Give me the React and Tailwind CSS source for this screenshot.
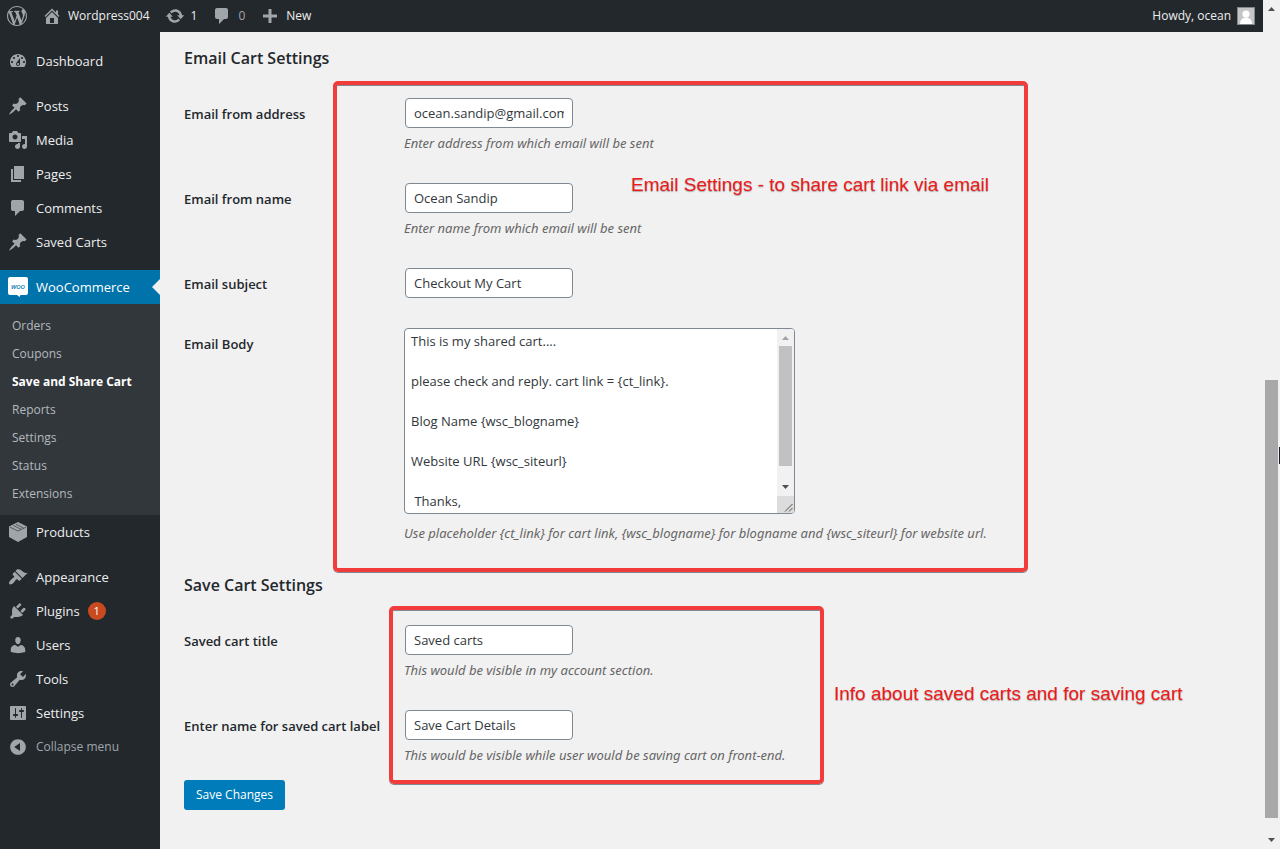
import React from "react";

const paths = {
  wordpress:
    "M20 10c0-5.51-4.49-10-10-10C4.48 0 0 4.49 0 10c0 5.52 4.48 10 10 10 5.51 0 10-4.48 10-10zM7.78 15.37L4.37 6.22c.55-.02 1.17-.08 1.17-.08.5-.06.44-1.13-.06-1.11 0 0-1.45.11-2.37.11-.18 0-.37 0-.58-.01C4.12 2.69 6.87 1.11 10 1.11c2.33 0 4.45.87 6.05 2.34-.68-.11-1.65.39-1.65 1.58 0 .74.45 1.36.9 2.1.35.61.55 1.36.55 2.46 0 1.49-1.4 5-1.4 5l-3.03-8.37c.54-.02.82-.17.82-.17.5-.05.44-1.25-.06-1.22 0 0-1.44.12-2.38.12-.87 0-2.33-.12-2.33-.12-.5-.03-.56 1.2-.06 1.22l.92.08 1.26 3.41zM17.41 10c.24-.64.74-1.87.43-4.25.7 1.29 1.05 2.71 1.05 4.25 0 3.29-1.73 6.24-4.4 7.78.97-2.59 1.94-5.2 2.92-7.78zM6.1 18.09C3.12 16.65 1.11 13.53 1.11 10c0-1.3.23-2.48.72-3.59C3.25 10.3 4.67 14.2 6.1 18.09zm4.03-6.63l2.58 6.98c-.86.29-1.76.45-2.71.45-.79 0-1.57-.11-2.29-.33.81-2.38 1.62-4.74 2.42-7.1z",
  home: "M16 8.5l1.53 1.53-1.06 1.06L10 4.6l-6.47 6.49-1.06-1.06L10 2.5l4 4v-2h2v4zm-6-2.46l6 5.99V18H4v-5.97zM12 17v-5H8v5h4z",
  update:
    "M10.2 3.28c3.53 0 6.43 2.61 6.92 6h2.08l-3.5 4-3.5-4h2.32c-.45-1.97-2.21-3.45-4.32-3.45-1.45 0-2.73.71-3.54 1.78L4.95 5.66C6.23 4.2 8.11 3.28 10.2 3.28zm-.4 13.44c-3.52 0-6.43-2.61-6.92-6H.8l3.5-4c1.17 1.33 2.33 2.67 3.5 4H5.48c.45 1.97 2.21 3.45 4.32 3.45 1.45 0 2.73-.71 3.54-1.78l1.71 1.95c-1.28 1.46-3.15 2.38-5.25 2.38z",
  plus: "M17 8.5v3h-5.5V17h-3v-5.5H3v-3h5.500V3h3v5.500z",
  dashboard:
    "M3.76 16h12.48c1.1-1.37 1.76-3.11 1.76-5 0-4.42-3.58-8-8-8s-8 3.58-8 8c0 1.89.66 3.63 1.76 5zM10 4c.55 0 1 .45 1 1s-.45 1-1 1-1-.45-1-1 .45-1 1-1zM6 6c.55 0 1 .45 1 1s-.45 1-1 1-1-.45-1-1 .45-1 1-1zm8 0c.55 0 1 .45 1 1s-.45 1-1 1-1-.45-1-1 .45-1 1-1zm-5.37 5.55L12 7v6c0 1.1-.9 2-2 2s-2-.9-2-2c0-.57.24-1.08.63-1.45zM4 10c.55 0 1 .45 1 1s-.45 1-1 1-1-.45-1-1 .45-1 1-1zm12 0c.55 0 1 .45 1 1s-.45 1-1 1-1-.45-1-1 .45-1 1-1zm-5 3c0-.55-.45-1-1-1s-1 .45-1 1 .45 1 1 1 1-.45 1-1z",
  pin: "M10.44 3.02l1.82-1.82 6.36 6.35-1.83 1.82c-1.05-.68-2.48-.57-3.41.36l-.75.75c-.92.93-1.04 2.35-.35 3.41l-1.83 1.82-2.41-2.41-2.8 2.79c-.42.42-3.38 2.71-3.8 2.29s1.86-3.39 2.28-3.81l2.79-2.79L4.1 9.36l1.83-1.82c1.05.69 2.48.57 3.4-.36l.75-.75c.93-.92 1.05-2.35.36-3.41z",
  media:
    "M13 11V4c0-.55-.45-1-1-1h-1.67L9 1H5L3.67 3H2c-.55 0-1 .45-1 1v7c0 .55.45 1 1 1h10c.55 0 1-.45 1-1zM7 4.5c1.38 0 2.5 1.12 2.5 2.5S8.38 9.5 7 9.5 4.5 8.38 4.5 7 5.62 4.5 7 4.5zM14 6h5v10.5c0 1.38-1.12 2.5-2.5 2.5S14 17.88 14 16.5s1.12-2.5 2.5-2.5c.17 0 .34.02.5.05V9h-3V6zm-4 8.050V13h2v3.500c0 1.380-1.120 2.500-2.500 2.500S7 17.880 7 16.500 8.120 14 9.500 14c.17 0 .34.02.5.05z",
  page: "M6 15V2h10v13H6zm-1 1h8v2H3V5h2v11z",
  comment:
    "M5 2h9c1.1 0 2 .9 2 2v7c0 1.1-.9 2-2 2h-2l-5 5v-5H5c-1.1 0-2-.9-2-2V4c0-1.1.9-2 2-2z",
  appearance:
    "M14.48 11.06L7.41 3.99l1.5-1.5c.5-.56 2.3-.47 3.51.32 1.21.8 1.43 1.28 2.91 2.1 1.18.64 2.45 1.26 4.45.85zm-.71.71L6.7 4.7 4.93 6.47c-.39.39-.39 1.02 0 1.41l1.06 1.06c.39.39.39 1.03 0 1.42-.6.6-1.43 1.11-2.21 1.69-.35.26-.7.53-1.01.84C1.43 14.23.4 16.08 1.4 17.07c.99 1 2.84-.03 4.18-1.36.31-.31.58-.66.85-1.02.57-.78 1.08-1.61 1.69-2.21.39-.39 1.02-.39 1.41 0l1.06 1.06c.39.39 1.02.39 1.41 0z",
  plugins:
    "M13.11 4.36L9.87 7.6 8 5.73l3.24-3.24c.35-.34 1.05-.2 1.56.32.52.51.66 1.21.31 1.55zm-8 1.77l.91-1.12 9.01 9.01-1.19.84c-.71.71-2.63 1.16-3.82 1.16H6.14L4.9 17.26c-.59.59-1.54.59-2.12 0-.59-.58-.59-1.53 0-2.12l1.24-1.24v-3.88c0-1.13.4-3.19 1.09-3.89zm7.26 3.97l3.24-3.24c.34-.35 1.04-.21 1.55.31.52.51.66 1.21.31 1.55l-3.24 3.25z",
  users:
    "M10 9.25c-2.27 0-2.73-3.44-2.73-3.44C7 4.02 7.82 2 9.97 2c2.16 0 2.98 2.02 2.71 3.81 0 0-.41 3.44-2.68 3.44zm0 2.57L12.72 10c2.39 0 4.52 2.33 4.52 4.53v2.49s-3.65 1.13-7.24 1.13c-3.65 0-7.24-1.13-7.24-1.13v-2.49c0-2.25 1.94-4.48 4.47-4.48z",
  tools:
    "M16.68 9.77c-1.34 1.34-3.3 1.67-4.95.99l-5.41 6.52c-.99.99-2.59.99-3.58 0s-.99-2.59 0-3.57l6.52-5.42c-.68-1.65-.35-3.61.99-4.95 1.28-1.28 3.12-1.62 4.72-1.06l-2.89 2.89 2.82 2.82 2.86-2.87c.53 1.58.18 3.39-1.08 4.65zM3.81 16.21c.4.39 1.04.39 1.43 0 .4-.4.4-1.04 0-1.43-.39-.4-1.03-.4-1.43 0-.39.39-.39 1.03 0 1.43z",
  settings:
    "M18 16V4c0-.55-.45-1-1-1H3c-.55 0-1 .45-1 1v12c0 .55.45 1 1 1h14c.55 0 1-.45 1-1zM8 11h1c.55 0 1 .45 1 1s-.45 1-1 1H8v1.5c0 .28-.22.5-.5.5s-.5-.22-.5-.5V13H6c-.55 0-1-.45-1-1s.45-1 1-1h1V5.5c0-.28.22-.5.5-.5s.5.22.5.5V11zm5-2h-1c-.55 0-1-.45-1-1s.45-1 1-1h1V5.5c0-.28.22-.5.5-.5s.5.22.5.5V7h1c.55 0 1 .45 1 1s-.45 1-1 1h-1v5.5c0 .28-.22.5-.5.5s-.5-.22-.5-.5V9z",
  collapse:
    "M10 2.16c4.33 0 7.84 3.51 7.84 7.84s-3.51 7.84-7.84 7.84S2.16 14.33 2.16 10 5.71 2.16 10 2.16zm2 11.72V6.12L6.18 9.97z",
};

function Icon({ name }) {
  return (
    <svg viewBox="0 0 20 20" className="size-5 shrink-0 text-[#a0a5aa]" fill="currentColor" fillRule="evenodd" aria-hidden="true">
      <path d={paths[name]} />
    </svg>
  );
}

function BoxIcon() {
  return (
    <svg viewBox="0 0 20 20" className="size-5 shrink-0" aria-hidden="true">
      <path d="M10 0l9 4.600v10.400l-9 5-9-5V4.600z" fill="#a0a5aa" />
      <path d="M2 5.200L10 9 18 5.200M5.500 3.500l7.500 3.800M8 2.200l7.500 3.800" fill="none" stroke="#23282d" strokeWidth="0.600" />
    </svg>
  );
}

function WooIcon() {
  return (
    <svg viewBox="0 0 20 20" className="size-5 shrink-0" aria-hidden="true">
      <path d="M2 0h16a2 2 0 0 1 2 2v14a2 2 0 0 1-2 2h-5.500l-1 2-2.500-2H2a2 2 0 0 1-2-2V2a2 2 0 0 1 2-2z" fill="#fff" />
      <text x="10" y="11.500" textAnchor="middle" fontSize="6" fontWeight="600" fontStyle="italic" fill="#0073aa">
        WOO
      </text>
    </svg>
  );
}

function MenuItem({ icon, label, children }) {
  return (
    <li>
      <a href="#" className="flex h-[34px] items-center gap-2 pl-2 text-[#eee]">
        {icon === "box" ? <BoxIcon /> : <Icon name={icon} />}
        <span>{label}</span>
        {children}
      </a>
    </li>
  );
}

const submenu = ["Orders", "Coupons", "Save and Share Cart", "Reports", "Settings", "Status", "Extensions"];

function Sidebar() {
  return (
    <nav aria-label="Main menu" className="w-40 shrink-0 bg-[#23282d] pt-3 text-[13px] leading-5">
      <ul>
        <MenuItem icon="dashboard" label="Dashboard" />
      </ul>
      <ul className="mt-[11px]">
        <MenuItem icon="pin" label="Posts" />
        <MenuItem icon="media" label="Media" />
        <MenuItem icon="page" label="Pages" />
        <MenuItem icon="comment" label="Comments" />
        <MenuItem icon="pin" label="Saved Carts" />
      </ul>
      <ul className="mt-[11px]">
        <li>
          <a href="#" className="flex h-[34px] items-center gap-2 bg-[#0073aa] pl-2 text-white">
            <WooIcon />
            <span>WooCommerce</span>
            <svg viewBox="0 0 8 16" className="ml-auto h-4 w-2" aria-hidden="true">
              <path d="M8 0v16L0 8z" fill="#f1f1f1" />
            </svg>
          </a>
          <ul className="bg-[#32373c] pt-2 pb-[7px]">
            {submenu.map((s) => (
              <li key={s}>
                <a
                  href="#"
                  className={
                    s === "Save and Share Cart"
                      ? "flex h-7 items-center pl-3 text-xs font-bold text-white"
                      : "flex h-7 items-center pl-3 text-xs text-[#b4b9be]"
                  }
                >
                  {s}
                </a>
              </li>
            ))}
          </ul>
        </li>
        <MenuItem icon="box" label="Products" />
      </ul>
      <ul className="mt-[11px]">
        <MenuItem icon="appearance" label="Appearance" />
        <MenuItem icon="plugins" label="Plugins">
          <span className="flex size-[18px] items-center justify-center rounded-full bg-[#ca4a1f] text-[11px] text-white">1</span>
        </MenuItem>
        <MenuItem icon="users" label="Users" />
        <MenuItem icon="tools" label="Tools" />
        <MenuItem icon="settings" label="Settings" />
        <li>
          <button type="button" className="flex h-[34px] w-full items-center gap-2 pl-2 text-left text-xs text-[#a0a5aa]">
            <Icon name="collapse" />
            <span>Collapse menu</span>
          </button>
        </li>
      </ul>
    </nav>
  );
}

function TopBar() {
  return (
    <header className="flex h-8 items-center justify-between bg-[#23282d] pr-2 pl-[7px] text-xs text-[#eee]">
      <div className="flex items-center gap-[15px]">
        <a href="#" aria-label="About WordPress">
          <Icon name="wordpress" />
        </a>
        <a href="#" className="flex items-center gap-1.5">
          <Icon name="home" />
          Wordpress004
        </a>
        <a href="#" className="flex items-center gap-1.5">
          <Icon name="update" />1
        </a>
        <a href="#" className="flex items-center gap-1.5 text-[#a0a5aa]">
          <Icon name="comment" />0
        </a>
        <a href="#" className="flex items-center gap-1.5">
          <Icon name="plus" />
          <span>New</span>
        </a>
      </div>
      <a href="#" className="flex items-center gap-1.5">
        Howdy, ocean
        <svg viewBox="0 0 18 18" className="size-[18px]" aria-hidden="true">
          <path d="M0 0h18v18H0z" fill="#82878c" />
          <path d="M1 1h16v16H1z" fill="#c5c5c5" />
          <circle cx="9" cy="7" r="3.600" fill="#fff" />
          <path d="M3 17c0-4 2.500-6.500 6-6.500s6 2.500 6 6.500z" fill="#fff" />
        </svg>
      </a>
    </header>
  );
}

function Arrow({ up, muted }) {
  return (
    <svg viewBox="0 0 17 17" className="size-[17px] shrink-0" aria-hidden="true">
      <path d={up ? "M5 11h7L8.500 7z" : "M5 6h7L8.500 10z"} fill={muted ? "#a3a3a3" : "#505050"} />
    </svg>
  );
}

function Row({ id, label, hint, children }) {
  return (
    <div className="grid grid-cols-[220px_minmax(0,1fr)] py-[15px]">
      <label htmlFor={id} className="pt-1.5 text-[13px] leading-5 font-semibold text-[#23282d]">
        {label}
      </label>
      <div>
        {children}
        {hint && <p className="mt-[5px] font-['Noto_Sans','Segoe_UI',sans-serif] text-[13px] leading-5 text-[#666] italic">{hint}</p>}
      </div>
    </div>
  );
}

function TextRow({ id, label, hint, value, type = "text" }) {
  return (
    <Row id={id} label={label} hint={hint}>
      <input
        id={id}
        type={type}
        defaultValue={value}
        className="mx-px block h-[30px] w-[168px] rounded-[4px] border border-[#7e8993] bg-white px-2 text-[13px] text-[#32373c]"
      />
    </Row>
  );
}

const body = `This is my shared cart....

please check and reply. cart link = {ct_link}.

Blog Name {wsc_blogname}

Website URL {wsc_siteurl}

 Thanks,`;

function BodyField() {
  return (
    <div className="mb-[9px] flex h-[186px] w-[391px] overflow-hidden rounded-[4px] border border-[#7e8993] bg-white">
      <textarea
        id="email-body"
        defaultValue={body}
        className="min-w-0 flex-1 resize-none overflow-hidden px-1.5 py-0.5 text-[13px] leading-5 text-[#32373c] outline-none"
      />
      <div aria-hidden="true" className="flex w-[17px] flex-col bg-[#f1f1f1]">
        <Arrow up muted />
        <div className="mx-0.5 h-[120px] bg-[#c1c1c1]" />
        <div className="flex-1" />
        <Arrow />
        <svg viewBox="0 0 17 17" className="size-[17px] bg-[#dcdcdc]">
          <path d="M8 15.500L15.500 8M12 15.500l3.500-3.500" stroke="#505050" fill="none" />
        </svg>
      </div>
    </div>
  );
}

function PageScrollbar() {
  return (
    <div aria-hidden="true" className="relative flex w-[17px] shrink-0 flex-col bg-[#f1f1f1]">
      <Arrow up />
      <div className="grow-[363]" />
      <div className="mx-0.5 grow-[438] bg-[#a8a8a8]" />
      <div className="grow-[14]" />
      <Arrow />
      <span className="absolute top-[447px] right-0 h-[17px] w-px bg-[#1a1a2a]" />
    </div>
  );
}

const frame =
  "pointer-events-none absolute rounded-[5px] border-4 border-[#f23b3b] shadow-[0_1px_0_#808890,inset_0_1px_0_#808890]";
const note =
  "pointer-events-none absolute font-['Liberation_Sans',Arial,sans-serif] text-[19px] leading-6 whitespace-nowrap text-[#ee1a1a] [text-shadow:0_1px_1px_#aaa]";

export default function App() {
  return (
    <div className="flex min-h-screen bg-[#f1f1f1] font-['Open_Sans','Segoe_UI',sans-serif]">
      <div className="flex min-w-0 flex-1 flex-col">
        <TopBar />
        <div className="flex flex-1">
          <Sidebar />
          <main className="relative min-w-0 flex-1 px-6 pt-3.5">
            <form onSubmit={(e) => e.preventDefault()}>
              <h2 className="mb-[13px] text-base leading-6 font-semibold text-[#23282d]">Email Cart Settings</h2>
              <TextRow
                id="email-address"
                label="Email from address"
                value="ocean.sandip@gmail.com"
                hint="Enter address from which email will be sent"
              />
              <TextRow id="email-name" label="Email from name" value="Ocean Sandip" hint="Enter name from which email will be sent" />
              <TextRow id="email-subject" label="Email subject" value="Checkout My Cart" />
              <Row
                id="email-body"
                label="Email Body"
                hint="Use placeholder {ct_link} for cart link, {wsc_blogname} for blogname and {wsc_siteurl} for website url."
              >
                <BodyField />
              </Row>
              <h2 className="mt-[15px] mb-[13px] text-base leading-6 font-semibold text-[#23282d]">Save Cart Settings</h2>
              <TextRow id="saved-title" label="Saved cart title" value="Saved carts" hint="This would be visible in my account section." />
              <TextRow
                id="saved-label"
                label="Enter name for saved cart label"
                value="Save Cart Details"
                hint="This would be visible while user would be saving cart on front-end."
              />
              <button type="submit" className="h-[30px] rounded-[3px] bg-[#007cba] px-3 text-xs text-white">
                Save Changes
              </button>
            </form>

            <div className={`${frame} top-[49px] left-[173px] h-[491px] w-[695px]`} />
            <p className={`${note} top-[141px] left-[471px]`}>Email Settings - to share cart link via email</p>
            <div className={`${frame} top-[574px] left-[229px] h-[178px] w-[435px]`} />
            <p className={`${note} top-[650px] left-[674px]`}>Info about saved carts and for saving cart</p>
          </main>
        </div>
      </div>
      <PageScrollbar />
    </div>
  );
}
